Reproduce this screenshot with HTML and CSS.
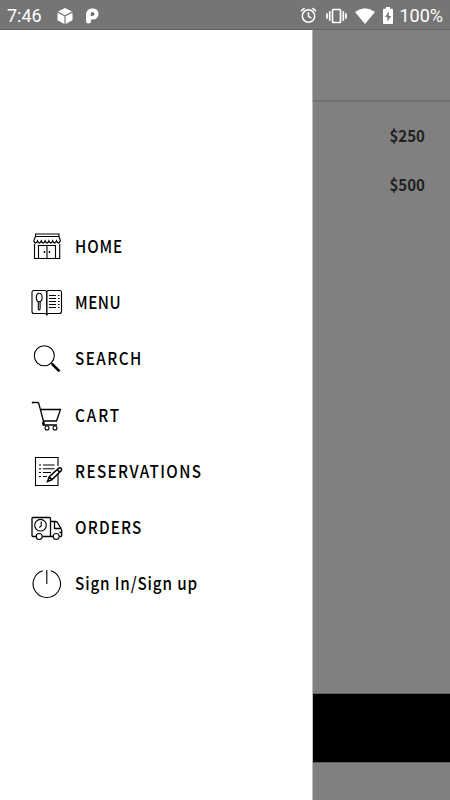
FILE: index.html
```html
<!DOCTYPE html>
<html lang="en">
<head>
<meta charset="utf-8">
<title>Menu</title>
<link rel="stylesheet" href="styles.css">
</head>
<body>
<header class="status">
  <span class="time">7:46</span>
  <svg class="cube" width="16" height="16" viewBox="0 0 16 16"><path d="M8 0l7 3.600L8 7.300 1 3.600zM.5 4.700l6.900 3.600V16L.5 12.200zM15.500 4.700v7.500L8.600 16V8.300z"/></svg>
  <svg class="pay" width="14" height="16" viewBox="0 0 14 16"><path fill-rule="evenodd" d="M0 7.500C0 3 2.500.5 6.500.5c3.800 0 6 2.200 6 5.500 0 3.500-2.400 5.600-6 5.600H5V13a2.500 2.500 0 0 1-5 0zM4.700 8h1.500c1.500 0 2.300-.7 2.300-2s-.8-2-2-2c-1.300 0-1.800.8-1.800 2z"/></svg>
  <span class="spacer"></span>
  <svg class="alarm" width="17" height="17" viewBox="0 0 17 17"><g fill="none" stroke="#fff" stroke-width="1.500"><circle cx="8.500" cy="9" r="6.200"/><path d="M1 4.200L4.600 1.200M16 4.200l-3.600-3M8.500 5.200v4.200l3 1.800"/></g></svg>
  <svg class="vibrate" width="21" height="16" viewBox="0 0 21 16"><g fill="none" stroke="#fff" stroke-width="1.700"><rect x="6.500" y="1.500" width="8" height="13" rx=".7"/><path d="M3.700 3.200v9.600M17.300 3.200v9.600M1 5.300v5.400M20 5.300v5.400"/></g></svg>
  <svg class="wifi" width="20" height="16" viewBox="0 0 20 16"><path d="M0 4Q10-3.400 20 4L10 16z"/></svg>
  <svg class="battery" width="10" height="17" viewBox="0 0 10 17"><path fill-rule="evenodd" d="M3 0h4v1.800h2q1 0 1 1V16q0 1-1 1H1q-1 0-1-1V2.800q0-1 1-1h2zM5.800 4.500L2 10h2.400v4.500L8.200 9H5.800z"/></svg>
  <span class="percent">100%</span>
</header>
<main class="screen">
  <nav class="drawer">
    <a class="item home">
      <svg class="icon" viewBox="0 0 40 40"><path d="M9.500 6h23.500v2.500h-23.500zM9.500 8.500L7.700 13M33 8.500l1.500 4.500M8.500 16v14.500h25.200V16M12.500 30.500V17.500h17v13M21 17.500v13"/><path class="bold" d="M7.700 13q1.900 4 3.800 0 1.900 4 3.800 0 1.900 4 3.800 0 1.900 4 3.800 0 1.900 4 3.800 0 1.900 4 3.800 0 1.900 4 3.800 0M18.500 23v2M23.500 23v2"/></svg>
      <span class="label">HOME</span>
    </a>
    <a class="item menu">
      <svg class="icon" viewBox="0 0 40 40"><path d="M20.800 7.500Q20 6.500 18.500 6.500H8q-2 0-2 2V27.500q0 2 2 2H18.500q1.500 0 2.300 1 .8-1 2.300-1H33.500q2 0 2-2V8.500q0-2-2-2H23q-1.500 0-2.200 1zM12.300 17.500v7.500q.9 2 1.800 0V17.500"/><ellipse cx="13.200" cy="13.500" rx="2.900" ry="4.200"/><path class="bold" d="M20.800 7.500v24"/><path d="M23 11.500h7M32 11.500h1.500M23 14.500h7M32 14.500h1.500M23 17.500h7M32 17.500h1.500M23 20.500h7M32 20.500h1.500M23 23.500h7M32 23.500h1.500"/></svg>
      <span class="label">MENU</span>
    </a>
    <a class="item search">
      <svg class="icon" viewBox="0 0 40 40"><circle cx="18.300" cy="16.800" r="10"/><path d="M25.500 24l2 2"/><path class="handle" d="M26 24.800l7.500 7.500"/></svg>
      <span class="label">SEARCH</span>
    </a>
    <a class="item cart-link">
      <svg class="icon" viewBox="0 0 40 40"><path class="cart" d="M6.500 7.500V6.500h5q1 0 1.300 1L18.500 29M14.500 13.500H34.500L30.500 25H17.500M18.500 25q-2.500.5-1.500 4H31"/><circle cx="21" cy="32" r="2"/><circle cx="29" cy="32" r="2"/></svg>
      <span class="label">CART</span>
    </a>
    <a class="item reservations">
      <svg class="icon" viewBox="0 0 40 40"><path d="M32 14V5.500H9.500V33.500H32V22M13 13h2M17 13h11.500M13 16.700h2M17 16.700h11.500M13 20.500h2M17 20.500h8M13 24.500h2M17 24.500h4"/><path class="pencil" d="M21.500 29.500l1.800-4.800 9.700-8.700q1.500-.5 2.300.6.700 1-.2 2.200l-9.300 9zM31 17.500l2.800 2.800M23.300 24.700l2.700 3"/></svg>
      <span class="label">RESERVATIONS</span>
    </a>
    <a class="item orders">
      <svg class="icon" viewBox="0 0 40 40"><path class="truck" d="M10 28.500H7q-1 0-1-1V10.500q0-1 1-1H23.500q1 0 1 1V28.500H16.500M24.500 13.500H29.500q1.500 0 2.300 1.500l3.200 5.500q.7 1 .7 2V27.500q0 1-1 1H33.500M24.500 28.500H27M28.500 13.500V20.500H35M35.500 24.500H33.500"/><circle cx="14.500" cy="17.200" r="5.800"/><path d="M15.200 13.500v4.500l-2 1.500"/><circle cx="13.200" cy="28.500" r="3"/><circle cx="30.200" cy="28.500" r="3"/></svg>
      <span class="label">ORDERS</span>
    </a>
    <a class="item sign">
      <svg class="icon" viewBox="0 0 40 40"><path d="M16.800 6.700a13.700 13.700 0 1 0 8 0M20.800 6v14"/></svg>
      <span class="label">Sign In/Sign up</span>
    </a>
  </nav>
  <section class="page">
    <div class="toolbar"></div>
    <div class="prices"><p>$250</p><p>$500</p></div>
    <div class="action"></div>
    <div class="bottom"></div>
  </section>
</main>
</body>
</html>
```

FILE: styles.css
```css
* { box-sizing: border-box; }
body {
  margin: 0;
  width: 450px;
  height: 800px;
  overflow: hidden;
  font-family: "Noto Sans CJK JP", "Noto Sans", sans-serif;
  background: #fff;
}
.status {
  display: flex;
  align-items: center;
  height: 30px;
  padding: 2px 7px 0 7px;
  background: #757575;
  border-bottom: 1px solid #636363;
  color: #fff;
  font: 400 18px/27px Roboto, sans-serif;
}
.status svg { fill: #fff; flex: none; }
.time { width: 50px; }
.cube { margin-right: 13px; }
.spacer { flex: 1; }
.alarm { margin-right: 9px; }
.vibrate { margin-right: 8px; }
.wifi { margin-right: 8px; }
.battery { margin-right: 6px; }
.screen { display: flex; height: 770px; }
.drawer {
  width: 313px;
  padding: 188px 0 0 26px;
  background: #fff;
  border-right: 1px solid #bdbdbd;
}
.item {
  display: flex;
  align-items: center;
  height: 56.200px;
  gap: 9px;
  color: #000;
  font-size: 17.500px;
  font-weight: 500;
  line-height: 26px;
  white-space: nowrap;
}
.label { transform: scaleX(.87); transform-origin: 0 50%; }
.home .label { letter-spacing: 1px; }
.menu .label { letter-spacing: .6px; }
.search .label { letter-spacing: 1.700px; }
.cart-link .label { letter-spacing: 2.200px; }
.reservations .label { letter-spacing: 1.600px; }
.orders .label { letter-spacing: 1.400px; }
.sign .label { letter-spacing: 1px; }
.icon {
  width: 40px;
  height: 40px;
  margin-top: 2px;
  flex: none;
  fill: none;
  stroke: #000;
  stroke-width: 1.100;
}
.home .icon, .menu .icon { margin-top: 3.600px; }
.icon .bold { stroke-width: 1.400; }
.icon .handle { stroke-width: 2.600; }
.icon .cart, .icon .truck { stroke-width: 1.300; }
.icon .pencil { fill: #fff; stroke-width: 1.500; }
.page {
  flex: 1;
  display: flex;
  flex-direction: column;
  background: #808080;
}
.toolbar {
  height: 71px;
  border-bottom: 1px solid #707070;
  box-shadow: 0 1px 1px #797979;
}
.prices {
  flex: 1;
  padding: 10px 25px 0 0;
  text-align: right;
  color: #212121;
  font-size: 16px;
  font-weight: 700;
}
.prices p {
  margin: 0;
  line-height: 49px;
  transform: scaleX(.94);
  transform-origin: 100% 50%;
}
.action {
  height: 69px;
  background: #000;
  border-top: 1px solid #626262;
}
.bottom { height: 38px; border-top: 1px solid #606060; }
```
